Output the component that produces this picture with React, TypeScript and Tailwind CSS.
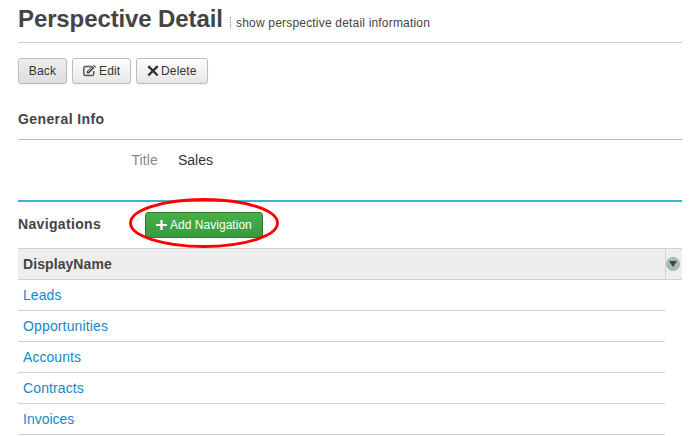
import React from "react";

const rows = [
  { name: "Leads", spacing: "tracking-[0.08px]" },
  { name: "Opportunities", spacing: "tracking-[0.14px]" },
  { name: "Accounts", spacing: "tracking-[0.06px]" },
  { name: "Contracts", spacing: "tracking-[0.12px]" },
  { name: "Invoices", spacing: "tracking-normal" },
];

function EditIcon() {
  return (
    <svg className="block h-[12px] w-[13px]" viewBox="0 0 13 12" fill="none">
      <path d="M8.5 1.5H2.2Q.8 1.5 .8 2.9v6.2q0 1.4 1.4 1.4h7.1q1.4 0 1.4-1.4V6" stroke="#555" strokeWidth="1.5" />
      <path d="M3.8 6.2 9.3 1l2.1 2-5.5 5.4H3.8z" fill="#444" />
      <path d="M5.1 6.6 9.3 2.6" stroke="#eee" strokeWidth=".9" />
      <path d="m10 .6.5-.4q.4-.3.8 0l1.4 1.3q.3.4 0 .8l-.6.4z" fill="#444" />
    </svg>
  );
}

function CloseIcon() {
  return (
    <svg className="block h-[12px] w-[12px]" viewBox="0 0 12 12">
      <path d="m1.3 1.1 9.4 9.4M10.7 1.1 1.3 10.5" stroke="#333" strokeWidth="2.4" />
    </svg>
  );
}

function PlusIcon() {
  return (
    <svg className="block h-[11px] w-[11px]" viewBox="0 0 11 11">
      <path d="M5.5 0v10M0 5h11" stroke="#fff" strokeWidth="2.2" />
    </svg>
  );
}

const button =
  "flex h-[26px] items-center rounded-[3px] border border-[#bbb] text-[12px] leading-none text-[#333] shadow-[0_1px_2px_rgba(0,0,0,0.05)]";

export default function App() {
  return (
    <div className="h-[436px] w-[697px] overflow-hidden bg-white pl-[18px] font-['Liberation_Sans',Arial,sans-serif] text-[14px] text-[#444]">
      <div className="w-[664px]">
        <header className="flex h-[43px] items-start border-b border-[#d0d0d0]">
          <h1 className="w-[212px] pt-[5px] text-[24px] leading-[28px] font-bold tracking-[-0.11px] whitespace-nowrap">Perspective Detail</h1>
          <div className="mt-[17px] h-[12px] border-l border-dotted border-[#999]" />
          <p className="pt-[15px] pl-[5px] text-[12px] leading-[16px] tracking-[0.19px] whitespace-nowrap">show perspective detail information</p>
        </header>

        <div className="flex pt-[15px]">
          <button className={`${button} w-[49px] justify-center bg-linear-to-b from-[#ededed] to-[#dedede] tracking-[0.2px]`}>Back</button>
          <button className={`${button} ml-[5px] w-[59px] gap-[3px] bg-linear-to-b from-white to-[#e6e6e6] pl-[10px] tracking-[0.15px]`}>
            <EditIcon />
            Edit
          </button>
          <button className={`${button} ml-[5px] w-[72px] gap-[2px] bg-linear-to-b from-white to-[#e6e6e6] pl-[10px] tracking-[0.15px]`}>
            <CloseIcon />
            Delete
          </button>
        </div>

        <h2 className="h-[56px] border-b border-[#e6b35c] pt-[25px] leading-[20px] font-bold tracking-[0.4px]">General Info</h2>
        <div className="flex h-[62px] border-b-2 border-[#3bb5d4] pt-[10px] leading-[20px]">
          <span className="w-[140px] text-right tracking-[0.12px] text-[#888]">Title</span>
          <span className="pl-[20px] text-[#333]">Sales</span>
        </div>

        <div className="flex h-[46px] pt-[10px]">
          <h2 className="w-[127px] pt-[2px] leading-[20px] font-bold tracking-[0.34px]">Navigations</h2>
          <div className="relative h-[26px] w-[118px]">
            <button className="flex h-[26px] w-[118px] items-center gap-[3px] rounded-[3px] border border-[#2d7d31] bg-linear-to-b from-[#45b04a] to-[#389b3d] pl-[10px] text-[12px] leading-none tracking-[0.03px] whitespace-nowrap text-white">
              <PlusIcon />
              Add Navigation
            </button>
            <svg className="pointer-events-none absolute -top-[14px] -left-[16px] h-[50px] w-[150px]" viewBox="0 0 150 50" fill="none">
              <ellipse cx="75" cy="25" rx="73.5" ry="23.5" stroke="#f00" strokeWidth="2.8" />
            </svg>
          </div>
        </div>

        <div className="flex h-[32px] border-y border-[#d0d0d0] bg-[#eee]">
          <div className="w-[647px] pt-[5px] pl-[5px] leading-[20px] font-bold tracking-[0.08px]">DisplayName</div>
          <div className="flex w-[17px] items-center border-l border-[#d0d0d0]">
            <svg className="h-[14px] w-[14px]" viewBox="0 0 14 14">
              <circle cx="7" cy="7" r="7" fill="#a1bdb4" />
              <path d="M3 4h8L7 10z" fill="#444" />
            </svg>
          </div>
        </div>
        <ul className="w-[647px]">
          {rows.map((row) => (
            <li key={row.name} className={`h-[31px] border-b border-[#d0d0d0] pt-[5px] pl-[5px] leading-[20px] text-[#1488cc] ${row.spacing}`}>
              {row.name}
            </li>
          ))}
        </ul>
      </div>
    </div>
  );
}
